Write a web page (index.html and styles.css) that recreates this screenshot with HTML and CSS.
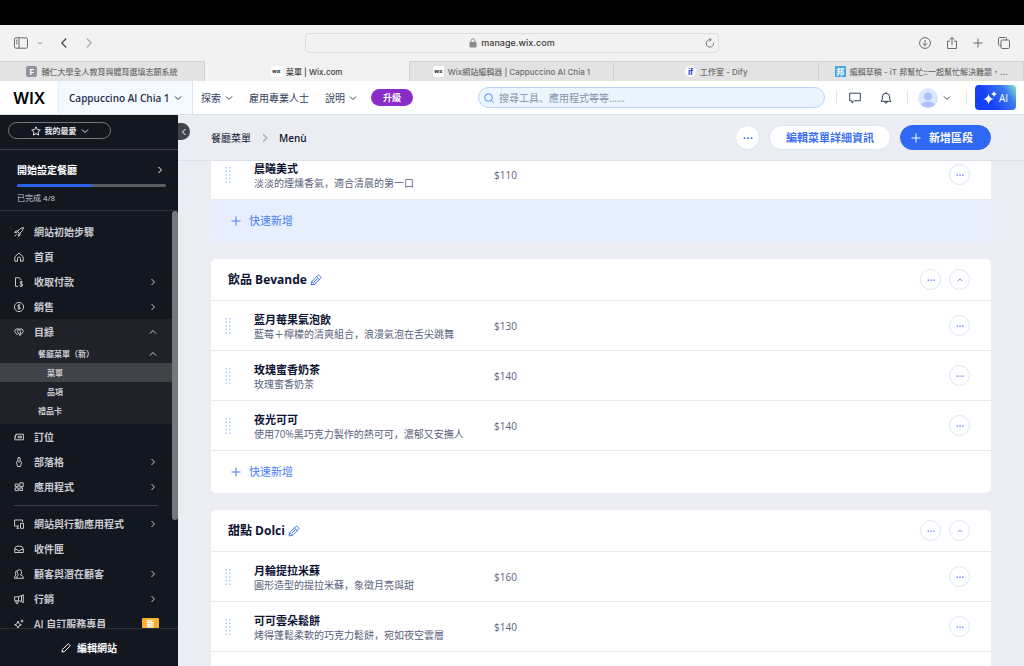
FILE: index.html
```html
<!DOCTYPE html>
<html lang="zh-Hant">
<head>
  <meta charset="UTF-8">
  <title>菜單 | Wix.com</title>
  <meta name="viewport" content="width=device-width, initial-scale=1.0">
  <link rel="stylesheet" href="styles.css">
</head>
<body>
  <!-- shared icons -->
  <svg class="defs" width="0" height="0" aria-hidden="true">
    <symbol id="down" viewBox="0 0 8 8"><path d="M1 2.5l3 3 3-3"/></symbol>
    <symbol id="up" viewBox="0 0 8 8"><path d="M1 5.5l3-3 3 3"/></symbol>
    <symbol id="right" viewBox="0 0 8 8"><path d="M2.5 1l3 3-3 3"/></symbol>
    <symbol id="left" viewBox="0 0 8 8"><path d="M5.5 1l-3 3 3 3"/></symbol>
    <symbol id="plus" viewBox="0 0 10 10"><path d="M5 .5v9M.5 5h9"/></symbol>
    <symbol id="dots" viewBox="0 0 8 8"><path class="solid" d="M.6 3.400h1.300v1.300H.6zM3.400 3.400h1.300v1.300H3.400zM6.200 3.400h1.300v1.300H6.200z"/></symbol>
    <symbol id="pencil" viewBox="0 0 12 12"><path d="M1 11l.8-3.400L7.600 1.600q1-1 2 0l.9.9q.9.9 0 1.900L4.600 10.200zM6.400 2.800l2.900 2.900M1.800 7.600l2.800 2.600M4 8l3.600-3.600"/></symbol>
    <symbol id="grip" viewBox="0 0 6 16"><path class="solid" d="M.5 0H2v1.500H.5zM4 0h1.500v1.500H4zM.5 3.600H2v1.500H.5zM4 3.600h1.500v1.500H4zM.5 7.200H2v1.500H.5zM4 7.200h1.500v1.500H4zM.5 10.800H2v1.500H.5zM4 10.800h1.500v1.500H4zM.5 14.400H2v1.500H.5zM4 14.400h1.500v1.500H4z"/></symbol>
  </svg>

  <div class="screen-top"></div>

  <!-- browser toolbar -->
  <div class="toolbar">
    <div class="tools">
      <button aria-label="側邊欄"><svg class="icon w14" viewBox="0 0 14 12"><rect x=".5" y=".8" width="13" height="10.400" rx="1.500"/><path d="M5 1v10M2 3.200h1.500M2 5h1.500M2 6.800h1.500"/></svg></button>
      <button class="tool-menu" aria-label="側邊欄選項"><svg class="icon w6"><use href="#down"/></svg></button>
      <button class="back" aria-label="上一頁"><svg class="icon w12"><use href="#left"/></svg></button>
      <button class="forward" aria-label="下一頁"><svg class="icon w12"><use href="#right"/></svg></button>
    </div>
    <div class="address">
      <svg class="lock" viewBox="0 0 8 10"><rect x=".5" y="4" width="7" height="5.500" rx="1"/><path d="M2 4V2.800a2 2 0 014 0V4"/></svg>
      <span>manage.wix.com</span>
      <button class="reload" aria-label="重新載入"><svg class="icon w10" viewBox="0 0 10 10"><path d="M8.600 4.800A3.700 3.700 0 115 1.700h1M4.600.2l1.700 1.500-1.700 1.700"/></svg></button>
    </div>
    <div class="tools right">
      <button aria-label="下載"><svg class="icon w12" viewBox="0 0 12 12"><circle cx="6" cy="6" r="5.400"/><path d="M6 3v5.500M3.800 6.500L6 8.700l2.200-2.200"/></svg></button>
      <button aria-label="分享"><svg class="icon w12" viewBox="0 0 12 12"><path d="M4 4.200H1.500v7.300h9V4.200H8M6 8V.6M3.700 2.700L6 .5l2.300 2.200"/></svg></button>
      <button aria-label="新分頁"><svg class="icon w10"><use href="#plus"/></svg></button>
      <button aria-label="分頁總覽"><svg class="icon w12" viewBox="0 0 12 12"><path d="M3 8.500H1.500q-1 0-1-1v-6q0-1 1-1h6q1 0 1 1V3"/><rect x="3" y="3" width="8.500" height="8.500" rx="1.200"/></svg></button>
    </div>
  </div>

  <div class="tabs">
    <a href="#" class="tab"><span class="fav fav-f">F</span>輔仁大學全人教育與體育選填志願系統</a>
    <a href="#" class="tab active"><span class="fav fav-wix">WIX</span>菜單 | Wix.com</a>
    <a href="#" class="tab"><span class="fav fav-wix">WIX</span>Wix網站編輯器 | Cappuccino AI Chia 1</a>
    <a href="#" class="tab"><span class="fav fav-dify">if</span>工作室 - Dify</a>
    <a href="#" class="tab"><span class="fav fav-it">邦</span>編輯草稿 - iT 邦幫忙::一起幫忙解決難題，...</a>
  </div>

  <!-- Wix header -->
  <header class="header" lang="zh">
    <a href="#" class="logo">WIX</a>
    <button class="site">Cappuccino AI Chia 1 <svg class="icon w8"><use href="#down"/></svg></button>
    <nav class="top-nav">
      <button>探索 <svg class="icon w8"><use href="#down"/></svg></button>
      <a href="#">雇用專業人士</a>
      <button>說明 <svg class="icon w8"><use href="#down"/></svg></button>
    </nav>
    <button class="upgrade">升級</button>
    <label class="search">
      <svg class="icon w10" viewBox="0 0 10 10"><circle cx="4.500" cy="4.500" r="3.800"/><path d="M7.300 7.300l2.300 2.300"/></svg>
      <input type="text" aria-label="搜尋" placeholder="搜尋工具、應用程式等等......">
    </label>
    <div class="account">
      <button class="chat" aria-label="訊息"><svg class="icon w12" viewBox="0 0 12 12"><path d="M.7 1.200h10.600v7.600H5.500L3 11V8.800H.7z"/></svg></button>
      <button class="bell" aria-label="通知"><svg class="icon w12" viewBox="0 0 12 12"><path d="M6 .3v1M1 9.300h10L9.700 7.300V5a3.700 3.700 0 00-7.400 0v2.300zM4.500 9.500a1.500 1.500 0 003 0"/></svg></button>
      <button class="user" aria-label="帳號">
        <svg class="avatar" viewBox="0 0 20 20"><circle cx="10" cy="10" r="10" fill="#dce8fd"/><circle cx="10" cy="8.500" r="4" fill="#a9c4fb"/><path d="M3 17q2-3.200 7-3.200t7 3.200a10 10 0 01-14 0z" fill="#a9c4fb"/></svg>
        <svg class="icon w8"><use href="#down"/></svg>
      </button>
      <button class="ai"><svg class="sparkle" viewBox="0 0 14 14"><path d="M5.500 2.500Q6.200 7.300 11 8 6.200 8.700 5.500 13.500 4.800 8.700 0 8 4.800 7.300 5.500 2.500zM11 0q.4 2.600 3 3-2.600.4-3 3-.4-2.600-3-3 2.600-.4 3-3z"/></svg>AI</button>
    </div>
  </header>

  <div class="page">
    <aside class="sidebar">
      <div class="fav-wrap">
        <button class="favorites"><svg class="icon w10" viewBox="0 0 10 10"><path d="M5 .8l1.300 2.800 3 .4-2.200 2.100.5 3L5 7.600 2.400 9.100l.5-3L.7 4l3-.4z"/></svg>我的最愛 <svg class="icon w8"><use href="#down"/></svg></button>
      </div>
      <div class="setup">
        <a href="#" class="setup-title">開始設定餐廳 <svg class="icon w8"><use href="#right"/></svg></a>
        <div class="progress"><div class="progress-fill" style="width: 50%"></div></div>
        <p>已完成 4/8</p>
      </div>
      <nav class="menu">
        <a href="#"><svg class="icon w10" viewBox="0 0 10 10"><path d="M9.500.5Q6 .7 3.500 4.500l2 2Q9.300 4 9.500.5zM4 4H1.800L.6 5.500l2.600.2M6 6v2.200L4.500 9.400l-.2-2.600M2.500 7.500L.7 9.300"/></svg>網站初始步驟</a>
        <a href="#"><svg class="icon w10" viewBox="0 0 10 10"><path d="M.8 4.800L5 1l4.200 3.800v4.400H6.500V6.500a1.500 1.500 0 00-3 0v2.700H.8z"/></svg>首頁</a>
        <a href="#"><svg class="icon w10" viewBox="0 0 10 10"><path d="M4 9.300H1.500V.8h3.800L7.300 3M8.700 5.200Q8 4.300 7 4.500t-.8 1.300 1.400 1 .9 1.500-1.400 1.100T5.500 8.500M7.200 3.800v6.100"/></svg>收取付款<svg class="icon w8 arrow"><use href="#right"/></svg></a>
        <a href="#"><svg class="icon w10" viewBox="0 0 10 10"><circle cx="5" cy="5" r="4.600"/><path d="M6.300 3.600Q5.800 2.900 5 2.900q-1.300 0-1.300 1 0 .9 1.300 1.100t1.300 1.100q0 1-1.300 1-.9 0-1.400-.7M5 2.200v5.600"/></svg>銷售<svg class="icon w8 arrow"><use href="#right"/></svg></a>
        <div class="group">
          <a href="#"><svg class="icon w10" viewBox="0 0 10 10"><path d="M3.500 8L.5 4.500 2 2l3 .1L8 2l1.500 2.500L6 8.400 3.300 4.300 5 2.100M5 2.100l1.500 2.200L6 8.400"/></svg>目錄<svg class="icon w8 arrow"><use href="#up"/></svg></a>
          <div class="submenu">
            <a href="#">餐廳菜單（新）<svg class="icon w8 arrow"><use href="#up"/></svg></a>
            <a href="#" class="deep current">菜單</a>
            <a href="#" class="deep">品項</a>
            <a href="#">禮品卡</a>
          </div>
        </div>
        <a href="#"><svg class="icon w10" viewBox="0 0 10 10"><path d="M2.200 2.200h7.200v5.600H.6zM3.500 4.300h4v1.500h-4M2.200 2.200L.6 5.500"/></svg>訂位</a>
        <a href="#"><svg class="icon w10" viewBox="0 0 10 10"><path d="M3.500 9.500L2.500 5.500 4 3V.6h2V3l1.500 2.500-1 4zM5 3.500v2.500"/></svg>部落格<svg class="icon w8 arrow"><use href="#right"/></svg></a>
        <a href="#"><svg class="icon w10" viewBox="0 0 10 10"><path d="M5.800.8h3.400v3.800H5.800zM5.800 5.800h2.700v2.700H5.800zM1.200 5.800h3v2.900h-3zM1.200 2h3v2.600h-3z"/></svg>應用程式<svg class="icon w8 arrow"><use href="#right"/></svg></a>
        <hr>
        <a href="#"><svg class="icon w10" viewBox="0 0 10 10"><path d="M5 7H.6V1h8v2M2.500 9.300H5M6.500 4.300h3v5h-3zM3.700 7v2.300"/></svg>網站與行動應用程式<svg class="icon w8 arrow"><use href="#right"/></svg></a>
        <a href="#"><svg class="icon w10" viewBox="0 0 10 10"><path d="M.7 5.500Q1 2.200 3 2.200h4q2 0 2.300 3.300v3H.7zM.7 5.500h2.500Q3.500 7 5 7t1.800-1.500h2.500"/></svg>收件匣</a>
        <a href="#"><svg class="icon w10" viewBox="0 0 10 10"><path d="M2.500 9.300Q2.700 6.500 4.500 6 3 4.500 3.200 2.700T5.300.7t2.200 2T6.500 6q2.800.3 3 3.300zM3.300 1.800Q1.200 1.900 1.300 3.800T2.200 5.900Q.6 6.500.5 9.300h2"/></svg>顧客與潛在顧客<svg class="icon w8 arrow"><use href="#right"/></svg></a>
        <a href="#"><svg class="icon w10" viewBox="0 0 10 10"><path d="M.6 2.800h4L9.300.8v7.800L5.500 6.800H.6zM4.600 2.800v4M2 6.800v2.500h2V6.800M7.500 1.600v6"/></svg>行銷<svg class="icon w8 arrow"><use href="#right"/></svg></a>
        <a href="#"><svg class="icon w10" viewBox="0 0 10 10"><path d="M4 2l1 2.700L7.500 5.800 5 6.800 4 9.500 3 6.800.5 5.800 3 4.700zM8 .5v3M6.500 2h3"/></svg>AI 自訂服務專員<span class="badge">新</span></a>
      </nav>
      <div class="scrollbar"></div>
      <button class="edit-site"><svg class="icon w10" viewBox="0 0 10 10"><path d="M1 9l.4-2.500L6.600 1.300q.8-.8 1.600 0l.5.500q.8.8 0 1.600L3.500 8.600z"/></svg>編輯網站</button>
      <button class="collapse" aria-label="收合"><svg class="icon w8"><use href="#left"/></svg></button>
    </aside>

    <main class="main" lang="zh">
      <div class="page-bar">
        <nav class="crumbs"><a href="#">餐廳菜單</a><svg class="icon w10"><use href="#right"/></svg><span>Menù</span></nav>
        <button class="btn round" aria-label="更多"><svg class="icon w10"><use href="#dots"/></svg></button>
        <button class="btn">編輯菜單詳細資訊</button>
        <button class="btn primary"><svg class="icon w10"><use href="#plus"/></svg>新增區段</button>
      </div>

      <div class="sections">
        <section class="card scrolled">
          <div class="item">
            <svg class="grip"><use href="#grip"/></svg>
            <div class="info"><h3>晨曦美式</h3><p>淡淡的煙燻香氣，適合清晨的第一口</p></div>
            <span class="price">$110</span>
            <button class="mini" aria-label="更多"><svg class="icon w8"><use href="#dots"/></svg></button>
          </div>
          <button class="quick-add hover"><svg class="icon w10"><use href="#plus"/></svg>快速新增</button>
        </section>

        <section class="card">
          <div class="card-head">
            <h2>飲品 Bevande</h2>
            <button class="rename" aria-label="重新命名"><svg class="icon w12"><use href="#pencil"/></svg></button>
            <button class="mini first" aria-label="更多"><svg class="icon w8"><use href="#dots"/></svg></button>
            <button class="mini" aria-label="收合"><svg class="icon w6"><use href="#up"/></svg></button>
          </div>
          <div class="item">
            <svg class="grip"><use href="#grip"/></svg>
            <div class="info"><h3>藍月莓果氣泡飲</h3><p>藍莓＋檸檬的清爽組合，浪漫氣泡在舌尖跳舞</p></div>
            <span class="price">$130</span>
            <button class="mini" aria-label="更多"><svg class="icon w8"><use href="#dots"/></svg></button>
          </div>
          <div class="item">
            <svg class="grip"><use href="#grip"/></svg>
            <div class="info"><h3>玫瑰蜜香奶茶</h3><p>玫瑰蜜香奶茶</p></div>
            <span class="price">$140</span>
            <button class="mini" aria-label="更多"><svg class="icon w8"><use href="#dots"/></svg></button>
          </div>
          <div class="item">
            <svg class="grip"><use href="#grip"/></svg>
            <div class="info"><h3>夜光可可</h3><p>使用70%黑巧克力製作的熱可可，濃郁又安撫人</p></div>
            <span class="price">$140</span>
            <button class="mini" aria-label="更多"><svg class="icon w8"><use href="#dots"/></svg></button>
          </div>
          <button class="quick-add"><svg class="icon w10"><use href="#plus"/></svg>快速新增</button>
        </section>

        <section class="card">
          <div class="card-head">
            <h2>甜點 Dolci</h2>
            <button class="rename" aria-label="重新命名"><svg class="icon w12"><use href="#pencil"/></svg></button>
            <button class="mini first" aria-label="更多"><svg class="icon w8"><use href="#dots"/></svg></button>
            <button class="mini" aria-label="收合"><svg class="icon w6"><use href="#up"/></svg></button>
          </div>
          <div class="item">
            <svg class="grip"><use href="#grip"/></svg>
            <div class="info"><h3>月輪提拉米蘇</h3><p>圓形造型的提拉米蘇，象徵月亮與甜</p></div>
            <span class="price">$160</span>
            <button class="mini" aria-label="更多"><svg class="icon w8"><use href="#dots"/></svg></button>
          </div>
          <div class="item">
            <svg class="grip"><use href="#grip"/></svg>
            <div class="info"><h3>可可雲朵鬆餅</h3><p>烤得蓬鬆柔軟的巧克力鬆餅，宛如夜空雲層</p></div>
            <span class="price">$140</span>
            <button class="mini" aria-label="更多"><svg class="icon w8"><use href="#dots"/></svg></button>
          </div>
          <button class="quick-add" aria-label="快速新增"></button>
        </section>
      </div>
    </main>
  </div>
</body>
</html>
```
FILE: styles.css
```css
* { box-sizing: border-box; }
body { margin: 0; height: 100vh; display: flex; flex-direction: column; overflow: hidden; font-family: "Open Sans", "Noto Sans CJK TC", sans-serif; font-size: 10px; line-height: 14px; color: #131720; background: #ecedf2; }
h2, h3, p { margin: 0; }
a { color: inherit; text-decoration: none; }
button { border: 0; padding: 0; background: none; font: inherit; color: inherit; display: flex; align-items: center; justify-content: center; flex: none; cursor: pointer; }

.defs { position: absolute; }
.icon { fill: none; stroke: currentColor; stroke-width: 1; flex: none; }
.solid { fill: currentColor; stroke: none; }
.w6 { width: 6px; height: 6px; }
.w8 { width: 8px; height: 8px; }
.w10 { width: 10px; height: 10px; }
.w12 { width: 12px; height: 12px; }
.w14 { width: 14px; height: 12px; }

/* browser */
.screen-top { height: 25px; background: #000; flex: none; }
.toolbar { height: 36px; flex: none; display: flex; align-items: center; padding: 0 14px; background: #f3f2f2; color: #6b6b6b; font-family: Inter, sans-serif; font-size: 9px; font-weight: 500; }
.tools { flex: 1; display: flex; align-items: center; }
.tools.right { justify-content: flex-end; gap: 15px; }
.tool-menu { margin-left: 9px; }
.back { margin-left: 15px; color: #444; }
.forward { margin-left: 13px; color: #aaa; }
.back .icon, .forward .icon { stroke-width: 0.8px; }
.address { width: 42%; max-width: 414px; height: 20px; display: flex; align-items: center; justify-content: center; gap: 4px; border: 1px solid #dcdcdc; border-radius: 5px; color: #3c3c3c; position: relative; }
.lock { width: 8px; height: 10px; fill: #8a8a8a; }
.lock path { fill: none; stroke: #8a8a8a; }
.reload { position: absolute; right: 3px; color: #777; }

.tabs { height: 20px; flex: none; display: flex; background: #e3e3e3; font-family: Inter, "Noto Sans CJK TC", sans-serif; font-size: 8px; font-weight: 500; color: #6e6e6e; }
.tab { flex: 1 1 0; min-width: 0; display: flex; align-items: center; justify-content: center; gap: 4px; white-space: nowrap; overflow: hidden; border-top: 1px solid #d0d0d0; border-right: 1px solid #d0d0d0; }
.tab.active { background: #f3f2f2; color: #3c3c3c; border-top-color: #f3f2f2; }
.fav { width: 11px; height: 11px; flex: none; display: flex; align-items: center; justify-content: center; border-radius: 2px; font-size: 8px; font-weight: 700; }
.fav-f { background: #9093a0; color: #fff; }
.fav-wix { background: #fff; color: #000; font-size: 4px; }
.fav-dify { background: #fff; color: #1c38e8; border-radius: 50%; }
.fav-it { background: #4aa5e0; color: #fff; border-radius: 0; }

/* header */
.header { height: 34px; flex: none; display: flex; align-items: center; background: #fff; color: #32415c; border-bottom: 1px solid #d9e1ea; font-family: "Open Sans", "Noto Sans CJK SC", sans-serif; }
.logo { width: 58px; padding-left: 13px; font-family: Inter, sans-serif; font-size: 16px; font-weight: 600; color: #000; }
.site { height: 33px; width: 135px; justify-content: space-between; padding: 0 10px; background: #f4faff; border-left: 1px solid #e2eefb; border-right: 1px solid #d5e6f8; font-size: 10px; font-weight: 600; color: #26344f; white-space: nowrap; }
.top-nav { display: flex; align-items: center; gap: 16px; margin-left: 8px; white-space: nowrap; }
.top-nav button { gap: 4px; }
.upgrade { width: 42px; height: 17px; margin-left: 14px; border-radius: 9px; background: #8b2cc9; color: #fff; font-size: 9px; font-weight: 700; }
.search { flex: 1; height: 21px; margin: 0 11px 0 65px; display: flex; align-items: center; gap: 5px; padding: 0 5px; border: 1px solid #b9d2f8; border-radius: 11px; background: #eaf5fe; color: #5d8ff0; }
.search input { flex: 1; min-width: 0; border: 0; padding: 0; background: none; outline: none; font: inherit; color: #32415c; }
.search input::placeholder { color: #8791ab; opacity: 1; }
.account { display: flex; align-items: center; padding-right: 8px; }
.account > button { height: 13px; }
.account .chat { padding: 0 9px 0 12px; border-left: 1px solid #dfe3ea; }
.account .bell { padding: 0 15px 0 10px; border-right: 1px solid #dfe3ea; }
.account .user { gap: 5px; padding: 0 15px 0 10px; border-right: 1px solid #dfe3ea; }
.avatar { width: 20px; height: 20px; }
.account .ai { width: 41px; height: 25px; margin-left: 8px; gap: 2px; border-radius: 4px; background: linear-gradient(55deg, #1640f5 35%, #3d7cf0 75%, #86e8c0 100%); color: #fff; }
.sparkle { width: 14px; height: 14px; fill: #fff; }

.page { flex: 1; min-height: 0; display: flex; }

/* sidebar */
.sidebar { width: 178px; flex: none; display: flex; flex-direction: column; position: relative; background: #131720; color: #c9cbd0; font-weight: 600; }
.fav-wrap { height: 35px; flex: none; padding: 7px 8px; border-bottom: 1px solid #3d4048; }
.favorites { width: 103px; height: 17px; gap: 4px; border: 1px solid #72757c; border-radius: 9px; color: #e6e7e9; font-size: 8px; font-weight: 700; }
.setup { height: 61px; flex: none; padding: 13px 12px 0 17px; border-bottom: 1px solid #2c3038; font-size: 8px; font-weight: 400; }
.setup-title { display: flex; align-items: center; justify-content: space-between; font-size: 10px; font-weight: 700; color: #fff; }
.setup-title .icon { margin-right: 2px; }
.progress { height: 3px; margin: 7px 0 4px; border-radius: 2px; background: #5a5d64; }
.progress-fill { height: 3px; border-radius: 2px; background: #2b62ea; }
.menu { flex: 1; min-height: 0; overflow: hidden; padding-top: 8px; }
.menu a { height: 25px; display: flex; align-items: center; gap: 10px; padding: 0 21px 0 14px; white-space: nowrap; }
.menu .arrow { margin-left: auto; }
.group { background: #20222a; padding-bottom: 4px; }
.menu .submenu { font-size: 8px; }
.menu .submenu a { height: 19px; padding-left: 38px; }
.menu .submenu .deep { padding-left: 47px; }
.submenu .current { background: #424349; }
.menu hr { height: 1px; margin: 6px 20px 5px 14px; border: 0; background: #3d4048; }
.badge { width: 17px; height: 12px; margin-left: auto; margin-right: -2px; border-radius: 1px; background: #f5b02e; color: #fff; font-size: 8px; line-height: 12px; text-align: center; font-weight: 700; }
.scrollbar { position: absolute; right: 0; top: 96px; bottom: 146px; width: 6px; border-radius: 3px; background: #76777b; }
.edit-site { height: 38px; gap: 6px; border-top: 1px solid #2c3038; color: #fff; font-weight: 700; }
.collapse { position: absolute; left: 178px; top: 8px; width: 12px; height: 17px; border-radius: 0 9px 9px 0; background: #43444a; color: #fff; z-index: 2; }

/* content */
.main { flex: 1; min-width: 0; display: flex; flex-direction: column; font-family: "Open Sans", "Noto Sans CJK SC", sans-serif; }
.page-bar { height: 46px; flex: none; display: flex; align-items: center; gap: 9px; padding: 0 33px; border-bottom: 1px solid #dfe1e8; }
.crumbs { flex: 1; display: flex; align-items: center; gap: 9px; color: #131a35; }
.crumbs .icon { color: #a5a9b6; }
.crumbs span { font-weight: 600; }
.btn { height: 25px; padding: 0 16px; gap: 8px; border: 1px solid #d9e6fc; border-radius: 13px; background: #fff; color: #3f72f3; font-size: 11px; font-weight: 600; white-space: nowrap; }
.btn.round { width: 25px; padding: 0; }
.btn.primary { border-color: #2f68f5; background: #2f68f5; color: #fff; padding: 0 17px 0 10px; }

.sections { flex: 1; min-height: 0; overflow: hidden; padding: 0 33px; }
.card { margin-bottom: 17px; border-radius: 5px; background: #fff; overflow: hidden; }
.card.scrolled { margin-top: -11px; }
.card-head { height: 42px; display: flex; align-items: center; padding: 0 21px 0 17px; border-bottom: 1px solid #e6e8ee; }
.card-head h2 { font-size: 12px; line-height: 16px; font-weight: 700; color: #0d1333; }
.rename { margin-left: 3px; color: #3f76f2; }
.item { height: 50px; display: flex; align-items: center; padding: 0 21px 0 14px; border-bottom: 1px solid #e6e8ee; color: #5a5f7d; }
.grip { width: 6px; height: 16px; flex: none; color: #b3cbf8; }
.info { width: 240px; flex: none; margin-left: 23px; padding-top: 2px; white-space: nowrap; }
.info h3 { font-size: 11px; line-height: 15px; font-weight: 700; color: #0d1333; }
.mini { width: 21px; height: 21px; margin-left: 8px; border: 1px solid #d9e6fc; border-radius: 50%; background: #fff; color: #3f72f3; }
.item .mini, .mini.first { margin-left: auto; }
.quick-add { width: 100%; height: 42px; justify-content: flex-start; gap: 8px; padding-left: 20px; color: #4b7df5; font-size: 11px; }
.quick-add.hover { background: #e7effe; }
```
